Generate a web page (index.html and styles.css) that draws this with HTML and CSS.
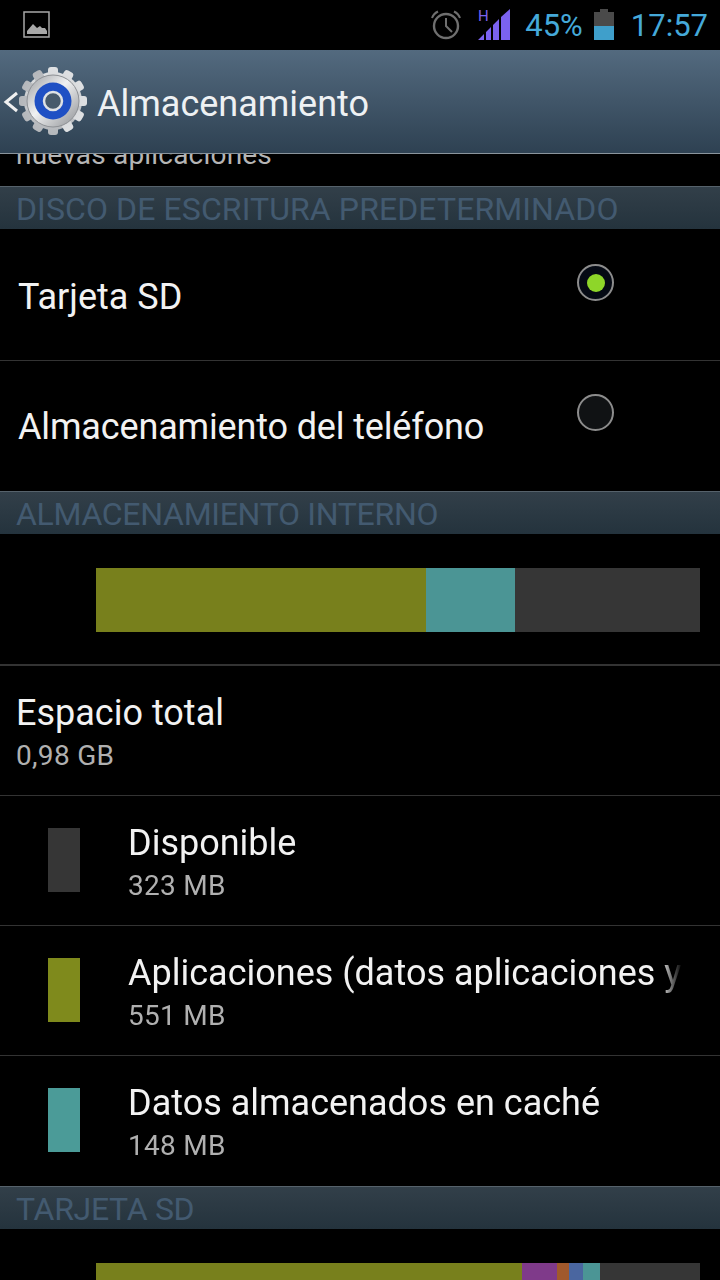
FILE: index.html
```html
<!DOCTYPE html>
<html>
<head>
    <title>Almacenamiento</title>
    <link rel="stylesheet" href="styles.css">
</head>
<body>

    <!-- Status bar -->
    <div class="status-bar">
        <svg class="picture-icon" width="28" height="28" viewBox="0 0 28 28">
            <rect x="1" y="1" width="25" height="25" fill="none" stroke="#a8a8a8" stroke-width="1.5"/>
            <path d="M4 23V20L10 13L14 17L17 15L19 17L22 17L24 20V23Z" fill="#a8a8a8"/>
        </svg>
        <div class="status-right">
            <svg class="alarm-icon" width="32" height="32" viewBox="0 0 32 32" fill="none" stroke="#6f6f6f">
                <circle cx="16" cy="17" r="12" stroke-width="2.4"/>
                <path d="M16 9V17L22 23" stroke-width="2"/>
                <path d="M2 9C3 6 5 4 8 2.500" stroke-width="2"/>
                <path d="M30 9C29 6 27 4 24 2.500" stroke-width="2"/>
            </svg>
            <svg class="signal-icon" width="34" height="32" viewBox="0 0 34 32">
                <text class="signal-h" x="0" y="12">H</text>
                <path d="M0 31L6 25V31ZM8 31V23L13 18V31ZM15 31V16L21 10V31ZM23 31V8L32 0V31Z" fill="#7b62f0"/>
            </svg>
            <span class="status-text battery-text">45%</span>
            <svg class="battery-icon" width="20" height="32" viewBox="0 0 20 32">
                <path d="M6 0H14V3H20V31H0V3H6Z" fill="#4a4a4a"/>
                <rect x="0" y="17" width="20" height="14" fill="#3f9fcb"/>
            </svg>
            <span class="status-text clock-text">17:57</span>
        </div>
    </div>

    <!-- Action bar -->
    <div class="action-bar">
        <svg class="back-icon" width="16" height="24" viewBox="0 0 16 24">
            <path d="M14 3L3 12L14 21" fill="none" stroke="#f0f0f0" stroke-width="3"/>
        </svg>
        <svg class="gear-icon" width="70" height="70" viewBox="0 0 70 70">
            <defs>
                <linearGradient id="gearBody" x1="0" y1="0" x2="0" y2="1">
                    <stop offset="0" stop-color="#dfe1e3"/>
                    <stop offset="1" stop-color="#b4b7bb"/>
                </linearGradient>
                <linearGradient id="gearRim" x1="0" y1="0" x2="1" y2="1">
                    <stop offset="0" stop-color="#9a9da1"/>
                    <stop offset="0.45" stop-color="#f0f1f2"/>
                    <stop offset="1" stop-color="#8c8f93"/>
                </linearGradient>
            </defs>
            <g fill="url(#gearBody)">
                <circle cx="35" cy="35" r="29"/>
                <rect x="30" y="1" width="10" height="68" rx="3"/>
                <rect x="30" y="1" width="10" height="68" rx="3" transform="rotate(30 35 35)"/>
                <rect x="30" y="1" width="10" height="68" rx="3" transform="rotate(60 35 35)"/>
                <rect x="30" y="1" width="10" height="68" rx="3" transform="rotate(90 35 35)"/>
                <rect x="30" y="1" width="10" height="68" rx="3" transform="rotate(120 35 35)"/>
                <rect x="30" y="1" width="10" height="68" rx="3" transform="rotate(150 35 35)"/>
            </g>
            <circle cx="35" cy="35" r="26" fill="url(#gearRim)" stroke="#8e9195" stroke-width="1"/>
            <circle cx="35" cy="35" r="18.500" fill="#1f50c4"/>
            <circle cx="35" cy="35" r="9" fill="#475a6c" stroke="#dfe2e5" stroke-width="2.500"/>
        </svg>
        <span class="action-title">Almacenamiento</span>
    </div>
    <div class="action-line"></div>

    <div class="content">

        <!-- Tail end of the row scrolled under the action bar -->
        <div class="clipped-row"><span>nuevas aplicaciones</span></div>

        <div class="section-header section-header-wide">DISCO DE ESCRITURA PREDETERMINADO</div>

        <div class="radio-row">
            <span class="row-title">Tarjeta SD</span>
            <span class="radio radio-on"></span>
        </div>
        <div class="radio-row radio-row-last">
            <span class="row-title">Almacenamiento del teléfono</span>
            <span class="radio"></span>
        </div>

        <div class="section-header section-header-tight">ALMACENAMIENTO INTERNO</div>

        <div class="bar-row">
            <div class="bar">
                <div class="seg seg-apps" style="width: 330px"></div>
                <div class="seg seg-cache" style="width: 89px"></div>
                <div class="seg seg-free" style="flex: 1"></div>
            </div>
        </div>

        <div class="info-row info-row-total">
            <div class="row-title">Espacio total</div>
            <div class="row-sub">0,98 GB</div>
        </div>

        <div class="info-row legend-row">
            <div class="swatch seg-free"></div>
            <div class="legend-text">
                <div class="row-title">Disponible</div>
                <div class="row-sub">323 MB</div>
            </div>
        </div>
        <div class="info-row legend-row">
            <div class="swatch swatch-apps"></div>
            <div class="legend-text">
                <div class="row-title">Aplicaciones (datos aplicaciones y contenido)</div>
                <div class="row-sub">551 MB</div>
            </div>
        </div>
        <div class="info-row legend-row info-row-last">
            <div class="swatch swatch-cache"></div>
            <div class="legend-text">
                <div class="row-title">Datos almacenados en caché</div>
                <div class="row-sub">148 MB</div>
            </div>
        </div>

        <div class="section-header section-header-tight">TARJETA SD</div>

        <div class="bar-row">
            <div class="bar">
                <div class="seg seg-apps" style="width: 426px"></div>
                <div class="seg seg-purple" style="width: 35px"></div>
                <div class="seg seg-orange" style="width: 12px"></div>
                <div class="seg seg-blue" style="width: 14px"></div>
                <div class="seg seg-cache" style="width: 17px"></div>
                <div class="seg seg-free" style="flex: 1"></div>
            </div>
        </div>
    </div>

</body>
</html>
```

FILE: styles.css
```css
body {
    font-family: Roboto, "Liberation Sans", sans-serif;
    margin: 0;
    padding: 0;
    background-color: #000;
    color: #f2f2f2;
    height: 1280px;
    overflow: hidden;
}

/* Status bar */
.status-bar {
    height: 50px;
    display: flex;
    align-items: center;
    justify-content: space-between;
    padding: 0 12px 0 23px;
}

.status-right {
    display: flex;
    align-items: center;
}

.alarm-icon {
    margin-right: 16px;
}

.signal-icon {
    margin-right: 13px;
    overflow: visible;
}

.signal-h {
    font-size: 15px;
    fill: #7b62f0;
}

.status-text {
    font-size: 31px;
    color: #45a9d9;
}

.battery-icon {
    margin: 0 17px 0 11px;
}

/* Action bar */
.action-bar {
    height: 103px;
    display: flex;
    align-items: center;
    padding-left: 3px;
    background: linear-gradient(#536a7f, #2e4152);
}

.back-icon {
    flex: none;
}

.gear-icon {
    flex: none;
    margin: -2px 0 0 -1px;
}

.action-title {
    font-size: 36px;
    margin: 4px 0 0 9px;
    color: #eef1f3;
}

.action-line {
    height: 1px;
    background-color: #8a949c;
}

/* Scrolling content */
.clipped-row {
    height: 32px;
    overflow: hidden;
    padding-left: 16px;
    font-size: 28px;
    letter-spacing: 0.2px;
    line-height: 26px;
    color: #b5b5b5;
}

.clipped-row span {
    display: block;
    margin-top: -12px;
}

.section-header {
    height: 42px;
    line-height: 45px;
    padding-left: 16px;
    border-top: 1px solid #56626b;
    background: linear-gradient(#323f49, #24333d);
    color: #435a70;
    font-size: 32px;
    white-space: nowrap;
}

.section-header-wide {
    letter-spacing: 0.1px;
}

.section-header-tight {
    letter-spacing: -0.3px;
}

.radio-row {
    display: flex;
    justify-content: space-between;
    border-bottom: 1px solid #333;
    padding: 0 106px 0 18px;
    box-sizing: border-box;
    height: 132px;
}

.radio-row .row-title {
    margin-top: 48px;
}

.radio {
    width: 33px;
    height: 33px;
    margin-top: 35px;
    border: 2px solid #8c8c8c;
    border-radius: 50%;
    background-color: #101214;
    display: flex;
    align-items: center;
    justify-content: center;
}

.radio-row-last {
    border-bottom: none;
    height: 130px;
}

.radio-row-last .row-title {
    margin-top: 46px;
    letter-spacing: -0.15px;
}

.radio-row-last .radio {
    margin-top: 33px;
}

.row-title {
    font-size: 36px;
    line-height: 40px;
    color: #f2f2f2;
    white-space: nowrap;
}

.radio-on {
    background-color: #050a14;
}

.radio-on::after {
    content: "";
    width: 18px;
    height: 18px;
    border-radius: 50%;
    background-color: #8ed629;
}

.bar-row {
    height: 132px;
    padding: 34px 20px 0 96px;
    box-sizing: border-box;
    border-bottom: 2px solid #333;
}

.bar {
    display: flex;
    height: 64px;
}

.seg-apps {
    background-color: #78801c;
}

.seg-cache {
    background-color: #4b9595;
}

.seg-free {
    background-color: #363636;
}

.seg-purple {
    background-color: #7f3a8a;
}

.seg-orange {
    background-color: #a1592c;
}

.seg-blue {
    background-color: #4a66a0;
}

.info-row {
    height: 130px;
    box-sizing: border-box;
    border-bottom: 1px solid #333;
}

.info-row-last {
    border-bottom: none;
}

.info-row-total {
    padding: 27px 0 0 16px;
}

.row-sub {
    margin-top: 7px;
    font-size: 28px;
    letter-spacing: 0.3px;
    line-height: 32px;
    color: #b0b0b0;
}

.legend-row {
    display: flex;
    padding: 32px 38px 0 48px;
}

.swatch {
    flex: none;
    width: 32px;
    height: 64px;
}

.swatch-apps {
    background-color: #7f8a1c;
}

.swatch-cache {
    background-color: #4b9b98;
}

.legend-text {
    flex: 1;
    margin: -5px 0 0 48px;
    min-width: 0;
    overflow: hidden;
    -webkit-mask-image: linear-gradient(to right, #000 96%, transparent);
    mask-image: linear-gradient(to right, #000 96%, transparent);
}
```
